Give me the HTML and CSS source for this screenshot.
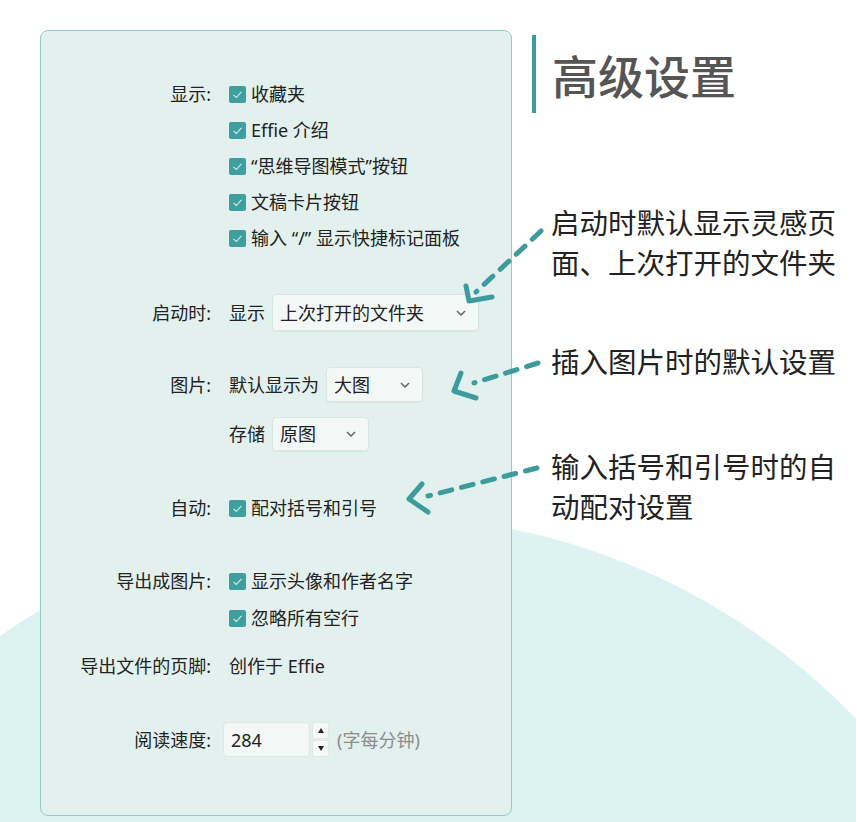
FILE: index.html
```html
<!DOCTYPE html>
<html lang="zh-CN">
<head>
<meta charset="utf-8">
<title>高级设置</title>
<link rel="stylesheet" href="styles.css">
</head>
<body>
<div class="page">
  <section class="panel">
    <div class="group">
      <div class="row"><span class="label">显示:</span><span class="ctrl"><span class="check"><svg viewBox="0 0 17 17" width="17" height="17"><polyline points="4.5,8.8 7.3,11.5 12.5,5.8" fill="none" stroke="#d6eeee" stroke-width="1.1"/></svg></span>收藏夹</span></div>
      <div class="row"><span class="label"></span><span class="ctrl"><span class="check"><svg viewBox="0 0 17 17" width="17" height="17"><polyline points="4.5,8.8 7.3,11.5 12.5,5.8" fill="none" stroke="#d6eeee" stroke-width="1.1"/></svg></span>Effie 介绍</span></div>
      <div class="row"><span class="label"></span><span class="ctrl"><span class="check"><svg viewBox="0 0 17 17" width="17" height="17"><polyline points="4.5,8.8 7.3,11.5 12.5,5.8" fill="none" stroke="#d6eeee" stroke-width="1.1"/></svg></span>“思维导图模式”按钮</span></div>
      <div class="row"><span class="label"></span><span class="ctrl"><span class="check"><svg viewBox="0 0 17 17" width="17" height="17"><polyline points="4.5,8.8 7.3,11.5 12.5,5.8" fill="none" stroke="#d6eeee" stroke-width="1.1"/></svg></span>文稿卡片按钮</span></div>
      <div class="row"><span class="label"></span><span class="ctrl"><span class="check"><svg viewBox="0 0 17 17" width="17" height="17"><polyline points="4.5,8.8 7.3,11.5 12.5,5.8" fill="none" stroke="#d6eeee" stroke-width="1.1"/></svg></span>输入 “/” 显示快捷标记面板</span></div>
    </div>

    <div class="group g-start">
      <div class="row row-sel"><span class="label">启动时:</span><span class="ctrl"><span class="pre">显示</span><span class="select sel-wide"><span>上次打开的文件夹</span><svg class="chev" viewBox="0 0 10 6" width="10" height="6"><polyline points="1,1 5,5 9,1" fill="none" stroke="#5f6665" stroke-width="1.5"/></svg></span></span></div>
    </div>

    <div class="group g-img">
      <div class="row row-sel2"><span class="label">图片:</span><span class="ctrl"><span class="pre">默认显示为</span><span class="select sel-small"><span>大图</span><svg class="chev" viewBox="0 0 10 6" width="10" height="6"><polyline points="1,1 5,5 9,1" fill="none" stroke="#5f6665" stroke-width="1.5"/></svg></span></span></div>
      <div class="row row-sel3"><span class="label"></span><span class="ctrl"><span class="pre">存储</span><span class="select sel-small"><span>原图</span><svg class="chev" viewBox="0 0 10 6" width="10" height="6"><polyline points="1,1 5,5 9,1" fill="none" stroke="#5f6665" stroke-width="1.5"/></svg></span></span></div>
    </div>

    <div class="group g-auto">
      <div class="row"><span class="label">自动:</span><span class="ctrl"><span class="check"><svg viewBox="0 0 17 17" width="17" height="17"><polyline points="4.5,8.8 7.3,11.5 12.5,5.8" fill="none" stroke="#d6eeee" stroke-width="1.1"/></svg></span>配对括号和引号</span></div>
    </div>

    <div class="group g-export">
      <div class="row"><span class="label">导出成图片:</span><span class="ctrl"><span class="check"><svg viewBox="0 0 17 17" width="17" height="17"><polyline points="4.5,8.8 7.3,11.5 12.5,5.8" fill="none" stroke="#d6eeee" stroke-width="1.1"/></svg></span>显示头像和作者名字</span></div>
      <div class="row row-tight"><span class="label"></span><span class="ctrl"><span class="check"><svg viewBox="0 0 17 17" width="17" height="17"><polyline points="4.5,8.8 7.3,11.5 12.5,5.8" fill="none" stroke="#d6eeee" stroke-width="1.1"/></svg></span>忽略所有空行</span></div>
    </div>

    <div class="group g-footer">
      <div class="row"><span class="label">导出文件的页脚:</span><span class="ctrl">创作于 Effie</span></div>
    </div>

    <div class="group g-speed">
      <div class="row row-num"><span class="label">阅读速度:</span><span class="ctrl ctrl-num"><span class="num">284</span><span class="spin"><span class="spin-up"><i class="tri-up"></i></span><span class="spin-down"><i class="tri-down"></i></span></span><span class="unit">(字每分钟)</span></span></div>
    </div>
  </section>

  <section class="notes">
    <h1 class="title">高级设置</h1>
    <p class="note note-1">启动时默认显示灵感页<br>面、上次打开的文件夹</p>
    <p class="note note-2">插入图片时的默认设置</p>
    <p class="note note-3">输入括号和引号时的自<br>动配对设置</p>
  </section>

  <svg class="arrows" viewBox="0 0 856 822" width="856" height="822" aria-hidden="true">
    <g fill="none" stroke="#3d9b9d" stroke-width="5" stroke-linecap="round" stroke-linejoin="round">
      <line x1="541" y1="231" x2="476" y2="292" stroke-dasharray="12 10"/>
      <polyline points="466,286 469,301 492,297"/>
      <line x1="538" y1="363" x2="474" y2="383" stroke-dasharray="12 10"/>
      <polyline points="461,373 454,391 476,398"/>
      <line x1="537" y1="468" x2="428" y2="496" stroke-dasharray="12 10"/>
      <polyline points="422,484 409,499 428,512"/>
    </g>
  </svg>
</div>
</body>
</html>
```

FILE: styles.css
```css
* { box-sizing: border-box; }

html, body {
  margin: 0;
  padding: 0;
}

body {
  width: 856px;
  height: 822px;
  overflow: hidden;
  background: radial-gradient(circle 660px at 380px 1175px, #ddf3f1 99.8%, #ffffff 100%);
  font-family: "Noto Sans", "Noto Sans CJK SC", sans-serif;
  color: #222;
}

.page {
  position: relative;
  display: flex;
  width: 856px;
  height: 822px;
}

/* ---------- settings panel ---------- */
.panel {
  margin: 30px 0 0 40px;
  width: 472px;
  height: 786px;
  background: #e2f1ed;
  border: 1px solid #93cbc6;
  border-radius: 8px;
  padding-top: 45px;
  display: flex;
  flex-direction: column;
  font-size: 18px;
  line-height: 24px;
}

.row {
  display: flex;
  align-items: center;
  height: 36px;
}

.label {
  width: 170px;
  flex: none;
  text-align: right;
  color: #222;
}

.ctrl {
  margin-left: 18px;
  display: flex;
  align-items: center;
  white-space: nowrap;
}

.check {
  width: 17px;
  height: 17px;
  flex: none;
  background: #3f9ea0;
  border-radius: 2px;
  margin-right: 5px;
  display: flex;
}

.g-start { margin-top: 38px; }
.g-img { margin-top: 36px; }
.g-auto { margin-top: 39px; }
.g-export { margin-top: 37px; }
.row-tight { margin-top: 1px; }
.g-footer { margin-top: 12px; }
.g-speed { margin-top: 38px; }

.row-sel { height: 37px; }
.row-sel2 { height: 35px; }
.row-sel3 { height: 34px; margin-top: 15px; }
.row-num { height: 35px; }

.pre { margin-right: 7px; }

.select {
  height: 100%;
  display: flex;
  align-items: center;
  justify-content: space-between;
  padding: 0 12px 0 7px;
  background: #f3f8f7;
  border: 1px solid #d8e7e4;
  border-radius: 4px;
  box-shadow: 0 1px 1px rgba(0, 0, 0, 0.04);
}

.row-sel .ctrl, .row-sel2 .ctrl, .row-sel3 .ctrl, .row-num .ctrl { height: 100%; }

.sel-wide { width: 207px; }
.sel-small { width: 97px; }

.chev { flex: none; }

/* ---------- number input ---------- */
.ctrl-num { margin-left: 12px; }

.num {
  width: 87px;
  height: 100%;
  display: flex;
  align-items: center;
  padding-left: 7px;
  background: #f3f8f7;
  border: 1px solid #dbe8e5;
  border-radius: 4px;
}

.spin {
  width: 17px;
  height: 100%;
  margin-left: 2px;
  display: flex;
  flex-direction: column;
  gap: 1px;
}

.spin-up, .spin-down {
  flex: 1;
  display: flex;
  align-items: center;
  justify-content: center;
  background: #f5faf9;
  border: 1px solid #dde9e6;
  border-radius: 3px;
}

.tri-up, .tri-down {
  width: 0;
  height: 0;
  border-left: 3.5px solid transparent;
  border-right: 3.5px solid transparent;
}

.tri-up { border-bottom: 5px solid #222; }
.tri-down { border-top: 5px solid #222; }

.unit {
  margin-left: 8px;
  color: #8c8c8c;
}

/* ---------- right side notes ---------- */
.notes {
  margin: 35px 0 0 20px;
  display: flex;
  flex-direction: column;
}

.title {
  margin: 0;
  height: 78px;
  border-left: 4px solid #3d9b9d;
  padding-left: 16px;
  display: flex;
  align-items: center;
  font-size: 46px;
  font-weight: 500;
  line-height: 1;
  color: #555;
  font-family: "Noto Sans CJK SC", sans-serif;
}

.note {
  margin: 0 0 0 19px;
  font-size: 28.5px;
  line-height: 40px;
  color: #222;
  font-family: "Noto Sans CJK SC", sans-serif;
  white-space: nowrap;
}

.note-1 { margin-top: 89px; }
.note-2 { margin-top: 59px; }
.note-3 { margin-top: 65px; }

/* ---------- arrows overlay ---------- */
.arrows {
  position: absolute;
  left: 0;
  top: 0;
  pointer-events: none;
}
```
